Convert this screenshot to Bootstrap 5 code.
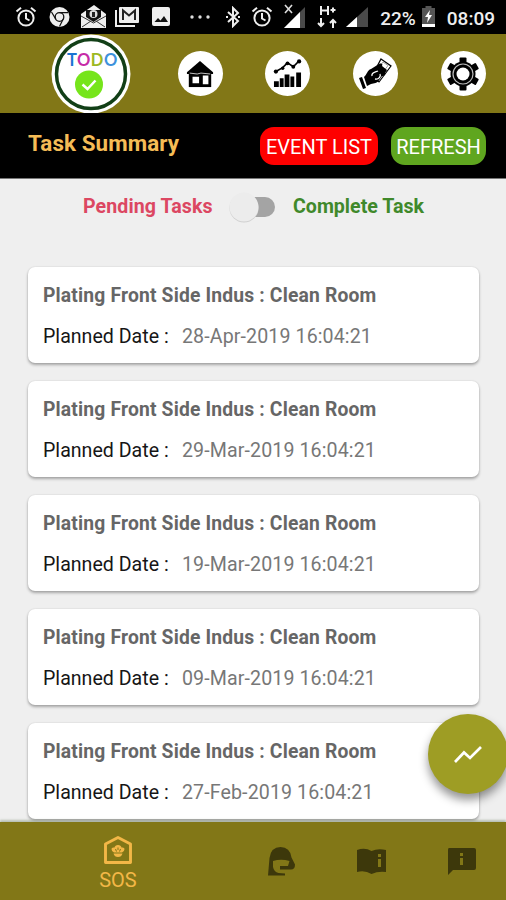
<!DOCTYPE html>
<html lang="en">
<head>
<meta charset="utf-8">
<meta name="viewport" content="width=device-width, initial-scale=1">
<title>Task Summary</title>
<link href="https://cdn.jsdelivr.net/npm/bootstrap@5.3.0/dist/css/bootstrap.min.css" rel="stylesheet">
<style>
body{font-family:Roboto,"Liberation Sans",sans-serif;background:#efefef;color:#111;width:506px;height:900px}
svg{display:block;flex:none}
.ln{white-space:nowrap;line-height:24px}
.status{height:34px;background:#000;color:#eee;padding:0 11px 0 15px}
.status .ln{font-size:19px;font-weight:500;padding-top:3px}
.olive{background:#827717}
.topnav{height:79px;padding:0 20.5px 0 51px}
.round{width:45px;height:45px;background:#fff}
.titlebar{height:66px;background:#000;padding:0 20px 0 28px;border-bottom:1px solid #777}
.titlebar h1{font-size:22.4px;font-weight:700;letter-spacing:.09px;color:#f5bc56;margin:0 0 5px}
.pill{height:38px;border:0;border-radius:14px;color:#fff;font-size:20px;padding:2px 0 0;text-align:center}
.pill-event{background:#fe0000;width:118px}
.pill-refresh{background:#5fa61f;width:95px;margin-left:13px}
.filter{height:54px;font-size:19.6px;font-weight:700;padding:1px 0 0 83px}
.pending{color:#dc4762;width:130px;letter-spacing:.08px}
.complete{color:#40892b}
.switch-track{width:46px;height:32px;margin:0 18px 0 16px}
.tasks{padding:34px 27px 0 28px;gap:18px;height:589px}
.task{height:96px;flex:none;border:0;border-radius:7px;box-shadow:0 2px 3px rgba(0,0,0,.3),0 0 2px rgba(0,0,0,.12);padding:17px 15px 0}
.task .name{font-size:19.3px;font-weight:700;letter-spacing:.17px;color:#666}
.task .when{font-size:19.6px;letter-spacing:.11px;margin-top:17px;color:#777}
.task .label{color:#161616;width:139px;letter-spacing:0}
.fab{width:80px;height:80px;right:-2px;top:714px;background:#9e9d24;box-shadow:0 6px 10px rgba(0,0,0,.42);z-index:2}
.tabs{height:78px;color:#f3b747;box-shadow:0 -2px 2px rgba(130,145,120,.5);z-index:3}
.tabs .ln{font-size:20px;line-height:22px}
.tab-sos{width:236px;padding-top:13px}
.tab-icon{width:90px;color:#3d380b}
</style>
</head>
<body class="position-relative overflow-hidden d-flex flex-column">
<svg class="d-none">
  <symbol id="alarm" viewBox="0 0 22 22"><g fill="none" stroke="#eee" stroke-width="2"><circle cx="11" cy="12" r="7.6"/><path d="M1.5 5.5 6 1.8M20.500 5.500 16 1.800M11 7v5.500l3.500 2"/></g></symbol>
</svg>
<header class="status d-flex align-items-center">
  <svg width="22" height="22"><use href="#alarm"/></svg>
  <svg class="ms-2" width="27" height="22" viewBox="-4 0 27 22"><circle cx="10.500" cy="11" r="10" fill="#eee"/><circle cx="10.500" cy="11" r="4.300" fill="none" stroke="#111" stroke-width="1.300"/><path d="M10.500 6.700H19M6.800 13.100 2.500 6M14.200 13.100 10.500 20.500" stroke="#111" stroke-width="1.200"/></svg>
  <svg width="35" height="24" viewBox="-9 0 35 24"><path d="m0 9 13-9 12 9v14H0z" fill="#eee"/><path d="M5 5h15v7l-7.500 5L5 12z" fill="#111"/><circle cx="12.500" cy="9" r="4" fill="#ddd"/><path d="M11 7h3v5h-3z" fill="#222"/><path d="m0 11 12.500 7L25 11M1 22l9-6M24 22l-9-6" stroke="#333" fill="none"/></svg>
  <svg width="32" height="22" viewBox="-8 0 32 22"><path d="M1 4v16h19" fill="none" stroke="#eee" stroke-width="2"/><rect x="4" y="1" width="20" height="16" rx="1" fill="#eee"/><path d="M8 14V4.500l6 5 6-5V14" fill="none" stroke="#222" stroke-width="2"/></svg>
  <svg width="32" height="20" viewBox="-13 0 32 20"><rect width="18" height="19" rx="2" fill="#eee"/><path d="m2.500 15 3.500-4 2.500 2.500L12 9l4 6z" fill="#111"/></svg>
  <svg width="40" height="8" viewBox="-19 0 40 8"><g fill="#ddd"><circle cx="2" cy="4" r="1.700"/><circle cx="10" cy="4" r="1.700"/><circle cx="18" cy="4" r="1.700"/></g></svg>
  <svg width="30" height="22" viewBox="-16 0 30 22"><path d="m1 6 10 9-5 5V2l5 5L1 16" fill="none" stroke="#eee" stroke-width="2"/><path d="M-1 11h2M11 11h2" stroke="#eee" stroke-width="2"/></svg>
  <svg class="ms-2" width="24" height="22" viewBox="-2 0 24 22"><use href="#alarm" width="22" height="22"/></svg>
  <svg width="32" height="26" viewBox="-10 0 32 26"><path d="M22 3v21H1z" fill="#4a4a4a"/><path d="M17 8v16H1z" fill="#fff"/><path d="m2 1 7 8M9 1 2 9" stroke="#ddd" stroke-width="1.600"/></svg>
  <svg width="32" height="26" viewBox="-12 0 32 26"><path d="M4 2v9M11 2v9M4 6.500h7M13.500 6h5M16 3.500v5M4 14v8M1 19l3 3 3-3M16 24v-8M13 19l3-3 3 3" fill="none" stroke="#eee" stroke-width="2"/></svg>
  <svg width="31" height="24" viewBox="-8 0 31 24"><path d="M23 2v20H1z" fill="#4a4a4a"/><path d="M12 12v10H1z" fill="#fff"/></svg>
  <span class="ln ms-auto">22%</span>
  <svg width="23" height="22" viewBox="-6 0 23 22"><path d="M3.500 0h6v2H13v19H0V2h3.500z" fill="#555"/><path d="M0 18h13v3H0z" fill="#fff"/><path d="M8 4 3 11h3l-1 6 5-8H7z" fill="#fff"/></svg>
  <span class="ln ms-2">08:09</span>
</header>

<nav class="topnav olive d-flex align-items-center justify-content-between">
  <svg width="80" height="80" viewBox="0 0 80 80"><circle cx="40" cy="40" r="39.500" fill="#fff"/><circle cx="40" cy="40" r="34.500" fill="#fff" stroke="#123f17" stroke-width="3.500"/><text x="16" y="32" font-size="16.500" font-weight="700" letter-spacing=".5" font-family="Lato,sans-serif"><tspan fill="#1974d2">T</tspan><tspan fill="#c62ba7">O</tspan><tspan fill="#9cb822">D</tspan><tspan fill="#3d91dc">O</tspan></text><circle cx="38" cy="50.500" r="14" fill="#76e51b"/><path d="m31.500 50.500 5 4.500 8-8.500" fill="none" stroke="#fff" stroke-width="2.500"/></svg>
  <span class="round rounded-circle d-flex align-items-center justify-content-center ms-1">
    <svg width="28" height="28" viewBox="0 0 30 30"><path d="M1 13 15 1l14 12v2H1z"/><path d="M3 14h24v15H3z"/><path d="M7 18h7v7H7zM18 16.500h6V26h-6z" fill="#fff"/><path d="m4 14 8 1 4-1 10 1" stroke="#fff" fill="none" stroke-width=".8"/></svg></span>
  <span class="round rounded-circle d-flex align-items-center justify-content-center">
    <svg width="29" height="29" viewBox="0 0 30 30"><path d="M1 23h5v6H1zM7 20h4v9H7zM12 16h5v13h-5zM18 18h4v11h-4zM24 14h5v15h-5z"/><path d="m3 13 7-4 5-5 6 4 6-6" fill="none" stroke="#000" stroke-width="1.700"/><circle cx="3" cy="13" r="2.200"/><circle cx="10" cy="9.500" r="1.800"/><circle cx="15" cy="4.500" r="2"/><circle cx="21" cy="8" r="2"/><circle cx="27" cy="2.500" r="2.200"/></svg></span>
  <span class="round rounded-circle d-flex align-items-center justify-content-center">
    <svg width="34" height="32" viewBox="0 0 34 32"><path d="m23 1 10 7-12 16-7-6z" fill="#fff" stroke="#000" stroke-width="1.200"/><path d="m25 4 5 3.500-3 4-5-3.500z" fill="none" stroke="#777" stroke-width=".7"/><path d="m1 20 3-1 4 11-3 1zM6 19c3-2 3-7 7-8l8-5c3-1 4 0 3 2l5 4-2 3c1 2-1 3-3 3l-2 3c-3 5-6 4-9 5l-4 2z"/><path d="M14 18c-1-4 4-4 6-5M17 21c4 1 6-3 5-5" fill="none" stroke="#fff" stroke-width="1.300"/></svg></span>
  <span class="round rounded-circle d-flex align-items-center justify-content-center">
    <svg width="34" height="34" viewBox="-17 -17 34 34"><rect x="-3.500" y="-16.500" width="7" height="33" rx="1"/><rect x="-3.500" y="-16.500" width="7" height="33" rx="1" transform="rotate(60)"/><rect x="-3.500" y="-16.500" width="7" height="33" rx="1" transform="rotate(120)"/><circle r="12.500"/><circle r="10" fill="none" stroke="#bbb" stroke-width="1.200"/><circle r="6.500" fill="#fff"/></svg></span>
</nav>

<div class="titlebar d-flex align-items-center">
  <h1 class="ln me-auto">Task Summary</h1>
  <button type="button" class="pill pill-event ln">EVENT LIST</button>
  <button type="button" class="pill pill-refresh ln">REFRESH</button>
</div>

<div class="filter d-flex align-items-center">
  <span class="ln pending">Pending Tasks</span>
  <svg class="switch-track" viewBox="0 0 46 32"><rect x="8" y="6" width="38" height="20" rx="10" fill="#a4a4a4"/><circle cx="15" cy="17" r="14.500" fill="#d0d0d0"/><circle cx="15" cy="16" r="14.500" fill="#ececec"/></svg>
  <span class="ln complete">Complete Task</span>
</div>

<main class="tasks d-flex flex-column overflow-hidden">
  <article class="card task"><div class="ln name"><span>Plating Front Side Indus : Clean Room</span></div><div class="ln when d-flex"><span class="label">Planned Date :</span><span>28-Apr-2019 16:04:21</span></div></article>
  <article class="card task"><div class="ln name"><span>Plating Front Side Indus : Clean Room</span></div><div class="ln when d-flex"><span class="label">Planned Date :</span><span>29-Mar-2019 16:04:21</span></div></article>
  <article class="card task"><div class="ln name"><span>Plating Front Side Indus : Clean Room</span></div><div class="ln when d-flex"><span class="label">Planned Date :</span><span>19-Mar-2019 16:04:21</span></div></article>
  <article class="card task"><div class="ln name"><span>Plating Front Side Indus : Clean Room</span></div><div class="ln when d-flex"><span class="label">Planned Date :</span><span>09-Mar-2019 16:04:21</span></div></article>
  <article class="card task"><div class="ln name"><span>Plating Front Side Indus : Clean Room</span></div><div class="ln when d-flex"><span class="label">Planned Date :</span><span>27-Feb-2019 16:04:21</span></div></article>
</main>

<button type="button" class="fab position-absolute rounded-circle border-0 p-0 d-flex align-items-center justify-content-center">
  <svg width="30" height="22" viewBox="0 0 30 22"><path d="m2 19 9-9.500 6 5.500L28 4" fill="none" stroke="#fff" stroke-width="2.700"/></svg>
</button>

<footer class="tabs olive d-flex position-relative">
  <div class="tab-sos d-flex flex-column align-items-center">
    <svg width="30" height="30" viewBox="0 0 30 30"><path d="M2.500 9 15 2.500 27.500 9v18.500h-25z" fill="none" stroke="#f3b747" stroke-width="2.900" stroke-linejoin="round"/><path d="M8.500 14q0-2 3-1.500Q12 10 15 10t3.500 2.500q3-.5 3 1.500 0 2.500-2.500 3.500h-8Q8.500 16.500 8.500 14zM10.500 18.500h9q-1 3.500-4.500 3.500t-4.500-3.500z" fill="#f3b747"/><path d="m12.500 14 1 2.500M17.500 14l-1 2.500M15 12.500V15" stroke="#827717"/></svg>
    <span class="ln mt-1">SOS</span>
  </div>
  <div class="tab-icon d-flex align-items-center justify-content-center"><svg width="28" height="29" viewBox="-1 0 28 29" fill="currentColor"><path d="M0 28.500 1.500 11Q3 0 12.500 0 22 0 23.500 10.500l3.500 7Q27 22.500 23 22.500H12v-3.500h8l1.500-5Q13 11.500 5 14v6q1 5 5.500 6l6.500.500v2z"/></svg></div>
  <div class="tab-icon d-flex align-items-center justify-content-center"><svg width="29" height="26" viewBox="0 0 29 26" fill="currentColor"><path d="M0 2q8-3 14.500 1Q21 0 29 2v22q-8-1-14.500 2Q8 22 0 24z"/><path d="M21 6h3v3h-3zM21 11h3v8h-3z" fill="#827717"/></svg></div>
  <div class="tab-icon d-flex align-items-center justify-content-center"><svg width="29" height="29" viewBox="0 0 29 29" fill="currentColor"><path d="M2 1h25q2 0 2 2v18q0 2-2 2H6l-5 5V3q0-2 1-2z"/><path d="M13 6h3v3h-3zM13 11h3v7h-3z" fill="#827717"/></svg></div>
</footer>
<script src="https://cdn.jsdelivr.net/npm/bootstrap@5.3.0/dist/js/bootstrap.bundle.min.js"></script>
</body>
</html>
